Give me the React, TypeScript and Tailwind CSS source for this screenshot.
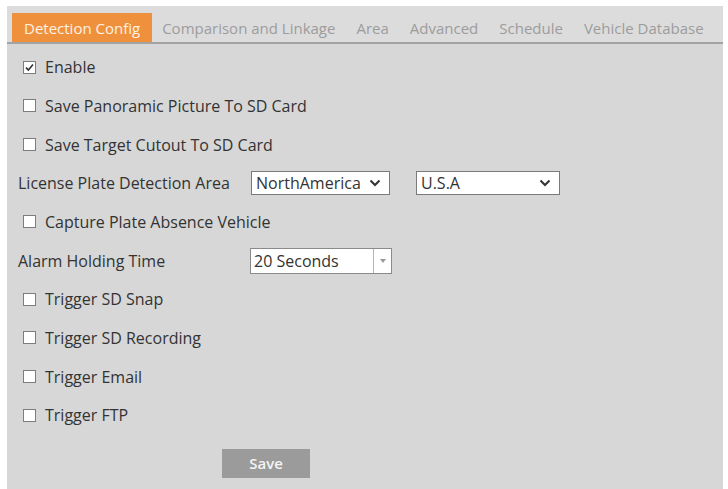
import React from "react";

const tabs = [
  "Detection Config",
  "Comparison and Linkage",
  "Area",
  "Advanced",
  "Schedule",
  "Vehicle Database",
];

function Box({ checked }: { checked?: boolean }) {
  return (
    <span className="flex h-[13px] w-[13px] shrink-0 items-center justify-center border border-[#7d7d7d] bg-white">
      {checked && (
        <svg viewBox="0 0 12 12" className="h-[11px] w-[11px]">
          <path d="M2.2 6.2 L4.8 8.8 L9.8 2.8" fill="none" stroke="#333" strokeWidth="1.8" />
        </svg>
      )}
    </span>
  );
}

function Check({ label, checked }: { label: string; checked?: boolean }) {
  return (
    <div className="flex h-[38.67px] items-center gap-[9px] pl-[16px]">
      <Box checked={checked} />
      <span>{label}</span>
    </div>
  );
}

function Chevron() {
  return (
    <svg viewBox="0 0 12 8" className="h-[8px] w-[12px]">
      <path d="M1.5 1.5 L6 6 L10.5 1.5" fill="none" stroke="#333" strokeWidth="2" />
    </svg>
  );
}

export default function App() {
  return (
    <div
      className="h-[489px] w-[728px] overflow-hidden bg-white pl-[7px] pr-[5px] pt-[6px] text-[16px] text-[#333]"
      style={{ fontFamily: '"Open Sans", "Noto Sans", sans-serif' }}
    >
      <div className="h-full bg-[#d7d7d7]">
        <div className="flex h-[38px] items-end border-b-2 border-[#a3a3a3] bg-[#dcdcdc] pl-[5px] text-[15px]">
          {tabs.map((t, i) => (
            <div
              key={t}
              className={
                i === 0
                  ? "flex h-[29px] items-center bg-[#ef913c] px-[12px] pt-[2px] text-[#fdf1e4]"
                  : "flex h-[29px] items-center pl-[10px] pr-[11px] pt-[2px] text-[#9c9c9c]"
              }
            >
              {t}
            </div>
          ))}
        </div>

        <div className="pt-[4px]">
          <Check label="Enable" checked />
          <Check label="Save Panoramic Picture To SD Card" />
          <Check label="Save Target Cutout To SD Card" />
          <div className="flex h-[38.67px] items-center pl-[11px]">
            <span className="w-[233px]">License Plate Detection Area</span>
            <div className="flex h-[24px] w-[139px] items-center justify-between border border-[#7a7a7a] bg-white pl-[4px] pr-[8px]">
              <span>NorthAmerica</span>
              <Chevron />
            </div>
            <div className="ml-[26px] flex h-[24px] w-[144px] items-center justify-between border border-[#7a7a7a] bg-white pl-[4px] pr-[8px]">
              <span>U.S.A</span>
              <Chevron />
            </div>
          </div>
          <Check label="Capture Plate Absence Vehicle" />
          <div className="flex h-[38.67px] items-center pl-[11px]">
            <span className="w-[232px]">Alarm Holding Time</span>
            <div className="flex h-[26px] w-[142px] items-stretch border border-[#8a8a8a] bg-white">
              <span className="flex flex-1 items-center pl-[3px]">20 Seconds</span>
              <span className="flex w-[18px] items-center justify-center border-l border-[#b5b5b5]">
                <svg viewBox="0 0 6 4" className="h-[4px] w-[6px]">
                  <path d="M0 0 L6 0 L3 4 Z" fill="#999" />
                </svg>
              </span>
            </div>
          </div>
          <Check label="Trigger SD Snap" />
          <Check label="Trigger SD Recording" />
          <Check label="Trigger Email" />
          <Check label="Trigger FTP" />
          <div className="mt-[14px] pl-[215px]">
            <button className="h-[29px] w-[88px] bg-[#9b9b9b] text-[15px] font-semibold text-[#f4f4f4]">
              Save
            </button>
          </div>
        </div>
      </div>
    </div>
  );
}
